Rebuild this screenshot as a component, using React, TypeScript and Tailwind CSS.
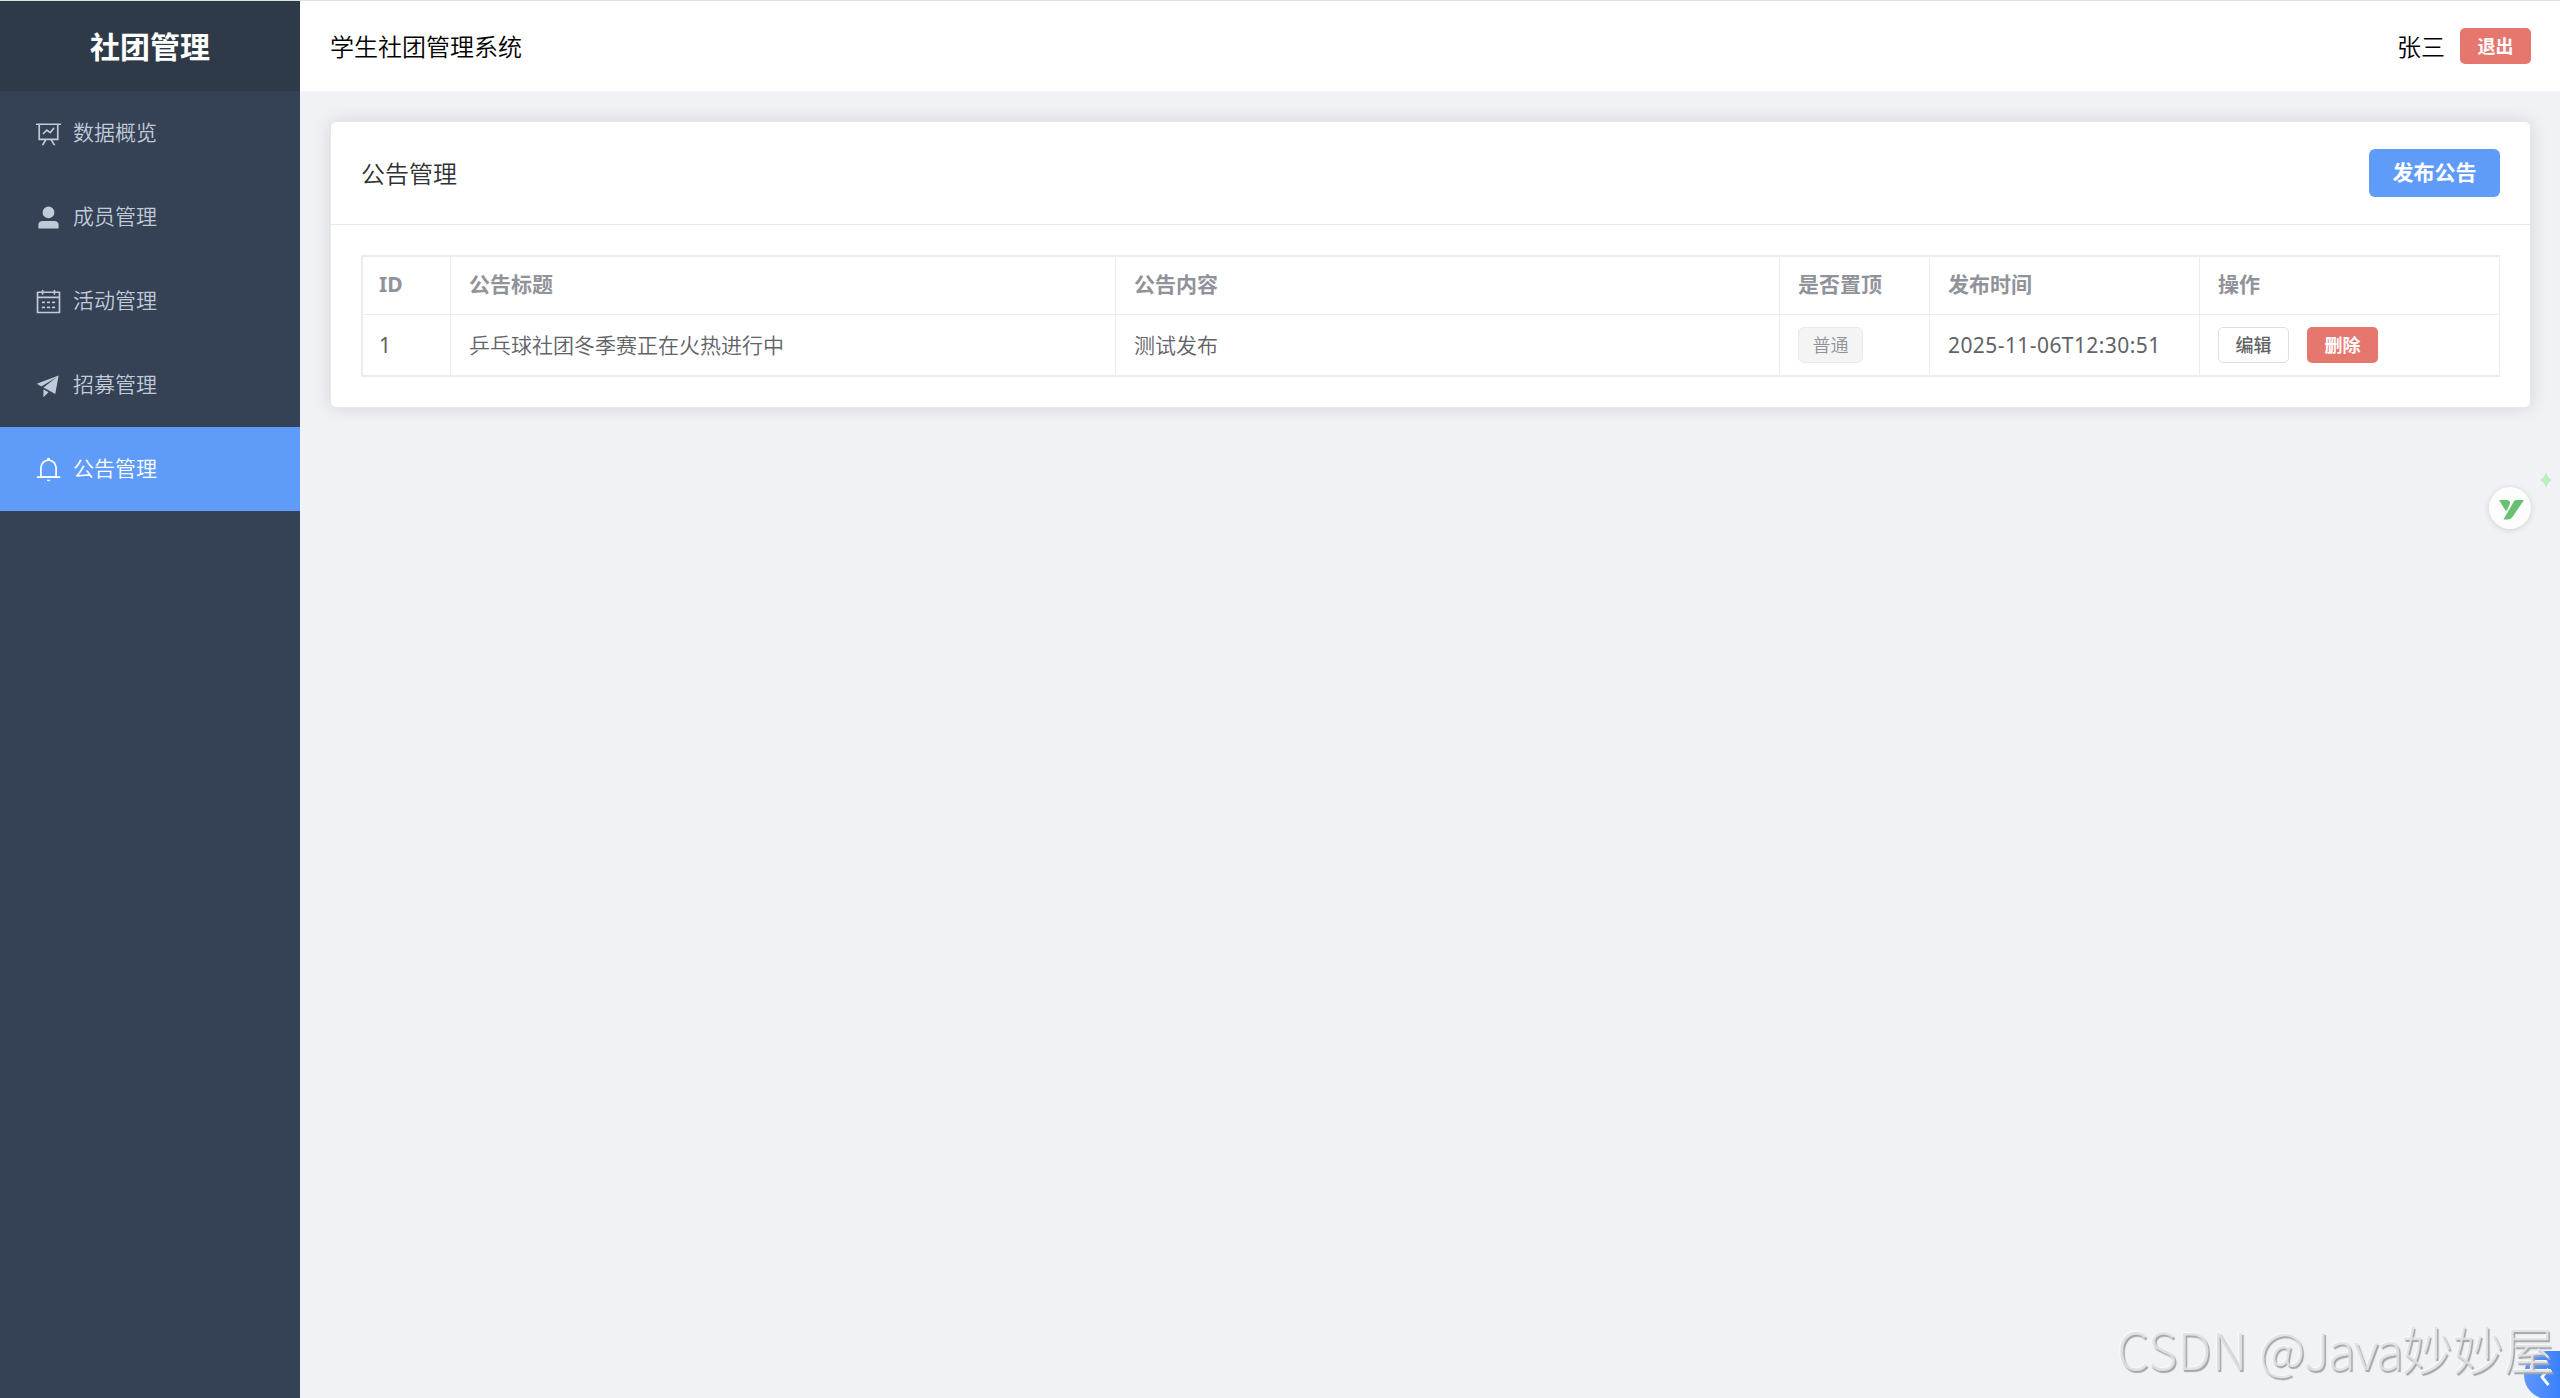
import type { ReactNode } from "react";

const ICONS: Record<string, string[]> = {
  data: [
    "M359.168 768H160a32 32 0 0 1-32-32V192H64a32 32 0 0 1 0-64h896a32 32 0 1 1 0 64h-64v544a32 32 0 0 1-32 32H665.216l110.848 192h-73.856L591.36 768H433.024L322.176 960H248.32zM832 192H192v512h640zM342.656 534.656a32 32 0 1 1-45.312-45.312L444.992 341.76l125.44 94.08L679.04 300.032a32 32 0 1 1 49.92 39.936L581.632 524.224 451.008 426.24 342.656 534.592z",
  ],
  user: [
    "M288 320a224 224 0 1 0 448 0 224 224 0 1 0-448 0m544 608H160a32 32 0 0 1-32-32v-96a160 160 0 0 1 160-160h448a160 160 0 0 1 160 160v96a32 32 0 0 1-32 32z",
  ],
  calendar: [
    "M128 384v512h768V192H768v32a32 32 0 1 1-64 0v-32H320v32a32 32 0 0 1-64 0v-32H128v128h768v64zm192-256h384V96a32 32 0 1 1 64 0v32h160a32 32 0 0 1 32 32v768a32 32 0 0 1-32 32H96a32 32 0 0 1-32-32V160a32 32 0 0 1 32-32h160V96a32 32 0 0 1 64 0zm-32 384h64a32 32 0 0 1 0 64h-64a32 32 0 0 1 0-64m0 192h64a32 32 0 1 1 0 64h-64a32 32 0 1 1 0-64m192-192h64a32 32 0 0 1 0 64h-64a32 32 0 0 1 0-64m0 192h64a32 32 0 1 1 0 64h-64a32 32 0 1 1 0-64m192-192h64a32 32 0 1 1 0 64h-64a32 32 0 1 1 0-64m0 192h64a32 32 0 1 1 0 64h-64a32 32 0 1 1 0-64",
  ],
  promotion: ["m64 448 832-320-128 704-446.08-243.328L832 192 242.816 545.536zm256 512V657.024L512 768z"],
  bell: [
    "M512 64a64 64 0 0 1 64 64v64H448v-64a64 64 0 0 1 64-64",
    "M256 768h512V448a256 256 0 1 0-512 0zm256-640a320 320 0 0 1 320 320v384H192V448a320 320 0 0 1 320-320",
    "M96 768h832q32 0 32 32t-32 32H96q-32 0-32-32t32-32m352 128h128a64 64 0 0 1-128 0",
  ],
};

const MENU = [
  { icon: "data", label: "数据概览" },
  { icon: "user", label: "成员管理" },
  { icon: "calendar", label: "活动管理" },
  { icon: "promotion", label: "招募管理" },
  { icon: "bell", label: "公告管理", active: true },
];

const COLUMNS = ["公告标题", "公告内容", "是否置顶", "发布时间", "操作"];

function Icon({ name }: { name: string }) {
  return (
    <span className="mr-[7px] flex w-9 justify-center">
      <svg viewBox="0 0 1024 1024" className="size-[27px]" fill="currentColor">
        {ICONS[name].map((d) => (
          <path key={d} d={d} />
        ))}
      </svg>
    </span>
  );
}

function SmallButton({ danger, children }: { danger?: boolean; children: ReactNode }) {
  return (
    <button
      className={
        danger
          ? "flex h-9 w-[71px] items-center justify-center rounded-[5px] bg-[#e6776f] pb-px text-lg leading-none font-bold text-white"
          : "flex h-9 w-[71px] items-center justify-center rounded-[5px] border border-[#dcdfe6] bg-white pb-px text-lg leading-none font-medium text-[#606266]"
      }
    >
      {children}
    </button>
  );
}

function Cell({ first, children }: { first?: boolean; children: ReactNode }) {
  return (
    <div
      className={
        first
          ? "flex items-center border-r border-[#ebecf2] pl-4"
          : "flex items-center border-r border-[#ebecf2] pl-[18px]"
      }
    >
      {children}
    </div>
  );
}

export default function App() {
  return (
    <div className="relative flex h-[1398px] w-[2560px] flex-col overflow-hidden border-t border-[#dfe1df] bg-[#f0f2f6] font-['Noto_Sans','Noto_Sans_CJK_SC',sans-serif]">
      <div className="flex min-h-0 flex-1">
        <aside className="flex w-[300px] flex-col bg-[#354154]">
          <div className="flex h-[90px] items-center justify-center bg-[#2f3a49] pt-[2px] text-[30px] leading-none font-bold text-white">
            社团管理
          </div>
          <nav className="flex flex-col text-[21px] leading-none font-[350]">
            {MENU.map((m) => (
              <a
                key={m.label}
                className={
                  m.active
                    ? "flex h-[84px] items-center bg-[#5f9bf9] pl-[30px] text-white"
                    : "flex h-[84px] items-center pl-[30px] text-[#c0cad9]"
                }
              >
                <Icon name={m.icon} />
                <span className="pb-px">{m.label}</span>
              </a>
            ))}
          </nav>
        </aside>

        <div className="flex flex-1 flex-col">
          <header className="flex h-[90px] items-center justify-between bg-white pr-[29px] pl-[30px] text-2xl leading-none font-[350] text-black">
            <span className="pt-[2px]">学生社团管理系统</span>
            <div className="flex items-center gap-[15px]">
              <span className="pt-[2px]">张三</span>
              <SmallButton danger>退出</SmallButton>
            </div>
          </header>

          <main className="py-[30px] pr-[29px] pl-[30px]">
            <section className="rounded-md border border-[#e5e7ec] bg-white shadow-[0_0_18px_rgba(0,0,0,0.12)]">
              <div className="flex h-[103px] items-center justify-between border-b border-[#e4e7ed] px-[30px]">
                <span className="pt-[2px] text-2xl leading-none font-[350] text-[#303133]">公告管理</span>
                <button className="flex h-12 w-[131px] items-center justify-center rounded-md bg-[#5f9bf9] pb-px text-[21px] leading-none font-bold text-white">
                  发布公告
                </button>
              </div>
              <div className="p-[30px]">
                <div className="border-y-2 border-l-2 border-[#ebecf2] text-[21px] leading-none">
                  <div className="grid h-[58px] grid-cols-[88px_665px_664px_150px_270px_1fr] border-b border-[#ebecf2] font-bold text-[#909399]">
                    <Cell first>
                      <span className="pb-[2px]">ID</span>
                    </Cell>
                    {COLUMNS.map((c) => (
                      <Cell key={c}>
                        <span className="pb-[2px]">{c}</span>
                      </Cell>
                    ))}
                  </div>
                  <div className="grid h-[60px] grid-cols-[88px_665px_664px_150px_270px_1fr] font-[350] text-[#606266]">
                    <Cell first>
                      <span className="font-normal">1</span>
                    </Cell>
                    <Cell>乒乓球社团冬季赛正在火热进行中</Cell>
                    <Cell>测试发布</Cell>
                    <Cell>
                      <span className="flex h-9 w-[65px] items-center justify-center rounded-md border border-[#e9e9eb] bg-[#f4f4f5] text-lg leading-none text-[#909399]">
                        普通
                      </span>
                    </Cell>
                    <Cell>
                      <span className="font-normal tracking-[0.42px]">2025-11-06T12:30:51</span>
                    </Cell>
                    <Cell>
                      <div className="flex gap-[18px]">
                        <SmallButton>编辑</SmallButton>
                        <SmallButton danger>删除</SmallButton>
                      </div>
                    </Cell>
                  </div>
                </div>
              </div>
            </section>
          </main>
        </div>
      </div>

      {/* Floating assistant badge */}
      <div className="absolute top-[486px] left-[2489px] flex size-[42px] items-center justify-center rounded-full bg-[#fdfdfd] shadow-[0_1px_6px_rgba(0,0,0,0.14)]">
        <svg viewBox="0 0 25 20" className="mt-[3px] ml-[2px] h-5 w-[25px]" fill="#68c172">
          <path d="M0 0h8.500q3.500 1.200 2.200 4L8 10.500H6.500z" />
          <path d="M16.500 0H25L13.500 17Q11.500 19.500 9 19.500H4.500L14 3Q15 .5 16.500 0z" />
        </svg>
      </div>
      <svg viewBox="0 0 12 16" className="absolute top-[471px] left-[2540px] h-4 w-3" fill="#bdedc0">
        <path d="M6 0Q7.500 5.500 12 8 7.500 10.500 6 16 4.500 10.500 0 8 4.500 5.500 6 0z" />
      </svg>

      {/* Collapsed side drawer handle */}
      <div className="absolute top-[1350px] left-[2524px] flex h-12 w-9 rounded-l-full bg-linear-to-r from-[#5f98fb] to-[#3a80fc]">
        <svg viewBox="0 0 10 18" className="mt-[17px] ml-4 h-[18px] w-[10px]" fill="none" stroke="white" strokeWidth="2.800">
          <path d="M8.500 1 2 9l6.500 8" />
        </svg>
      </div>

      <div className="absolute top-[1315px] left-[2117px] font-['Noto_Sans_CJK_SC',sans-serif] text-[51px] leading-[64px] font-light whitespace-nowrap text-[#dfe1e2]/90 [text-shadow:1.5px_1.5px_1px_#a5a6a8,-1px_-1px_0_#f8f9fa]">
        CSDN <span className="tracking-[-1.900px]">@Java</span>
        <span>妙妙屋</span>
      </div>
    </div>
  );
}
